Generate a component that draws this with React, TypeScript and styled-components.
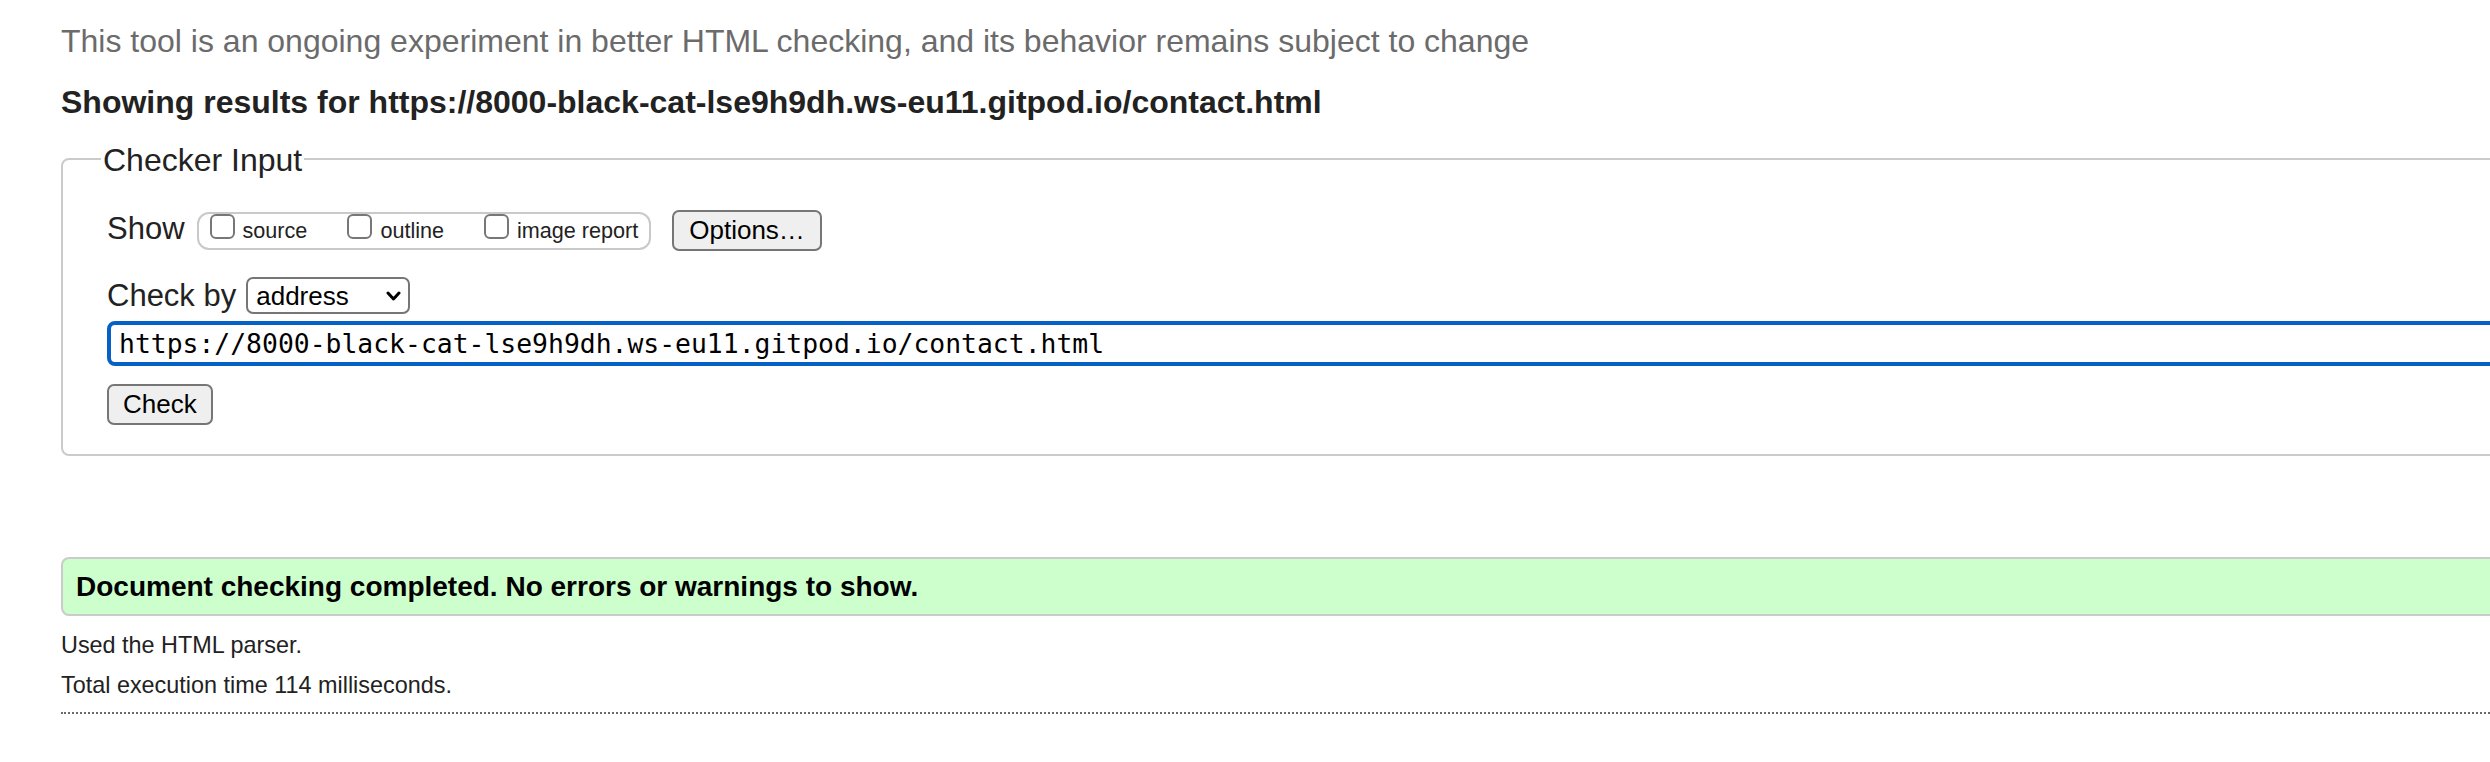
import React, { useEffect, useRef } from "react";
import styled, { createGlobalStyle } from "styled-components";

const GlobalStyle = createGlobalStyle`
  html, body {
    margin: 0;
    padding: 0;
    overflow: clip;
    background: #fff;
  }
  body {
    font-family: "Liberation Sans", Arial, Helvetica, sans-serif;
    color: #222;
  }
`;

const Viewport = styled.div`
  width: 100vw;
  overflow: clip;
`;

const Page = styled.main`
  width: calc(100vw + 200px);
  box-sizing: border-box;
  padding: 21px 0 40px 61px;
  display: flex;
  flex-direction: column;
`;

const Intro = styled.p`
  margin: 0;
  font-size: 32px;
  line-height: 40px;
  color: #6b6b6b;
`;

const Heading = styled.h2`
  margin: 23px 0 0;
  font-size: 32px;
  line-height: 36px;
  font-weight: bold;
  color: #222;
`;

const Fieldset = styled.fieldset`
  margin: 20px 0 0;
  padding: 32px 0 29px 44px;
  border: 2px solid #cbcbcb;
  border-radius: 8px;
  min-width: 0;
`;

const Legend = styled.legend`
  margin-left: -6px;
  padding: 2px 2px 0;
  font-size: 32px;
  line-height: 36px;
  color: #222;
`;

const FieldBody = styled.div`
  display: flex;
  flex-direction: column;
  align-items: flex-start;
`;

const Row = styled.div<{ $top?: number }>`
  display: flex;
  align-items: flex-start;
  margin-top: ${(p) => p.$top ?? 0}px;
`;

const RowLabel = styled.span`
  font-size: 31px;
  line-height: 37px;
  color: #222;
`;

const ShowGroup = styled.div`
  display: flex;
  align-items: flex-start;
  gap: 40px;
  height: 38px;
  box-sizing: border-box;
  margin: 2px 21px 0 12px;
  padding: 0 11px;
  border: 2px solid #c9c9c9;
  border-radius: 12px;
`;

const Option = styled.label`
  display: flex;
  align-items: flex-start;
  gap: 8px;
  font-size: 21.6px;
  line-height: 34px;
  color: #222;
`;

const Box = styled.input`
  appearance: none;
  width: 25px;
  height: 25px;
  margin: 0;
  box-sizing: border-box;
  border: 2px solid #777;
  border-radius: 6px;
  background: #fff;
`;

const Button = styled.button<{ $pad?: number }>`
  height: 41px;
  box-sizing: border-box;
  padding: 0 ${(p) => p.$pad ?? 14}px;
  font-family: "Liberation Sans", Arial, Helvetica, sans-serif;
  font-size: 26px;
  color: #000;
  background: #efefef;
  border: 2px solid #767676;
  border-radius: 7px;
`;

const SelectWrap = styled.span`
  position: relative;
  display: inline-flex;
  margin-left: 10px;
`;

const Select = styled.select`
  appearance: none;
  width: 164px;
  height: 37px;
  box-sizing: border-box;
  padding: 0 30px 0 8px;
  font-family: "Liberation Sans", Arial, Helvetica, sans-serif;
  font-size: 26px;
  color: #000;
  background: #fff;
  border: 2px solid #767676;
  border-radius: 7px;
`;

const Chevron = styled.svg`
  position: absolute;
  right: 9px;
  top: 50%;
  transform: translateY(-50%);
  pointer-events: none;
`;

const UrlInput = styled.input`
  width: 100%;
  height: 45px;
  box-sizing: border-box;
  margin-top: 7px;
  padding: 0 8px;
  font-family: "DejaVu Sans Mono", "Liberation Mono", monospace;
  font-size: 26.4px;
  color: #000;
  caret-color: #000;
  border: 4px solid #0560c8;
  border-radius: 8px;
  outline: none;
`;

const Result = styled.div`
  margin-top: 101px;
  height: 59px;
  box-sizing: border-box;
  display: flex;
  align-items: center;
  padding: 0 13px;
  background: #ccffcc;
  border: 2px solid #cbcbcb;
  border-radius: 8px;
  font-size: 28px;
  font-weight: bold;
  color: #000;
`;

const Note = styled.p<{ $top?: number }>`
  margin: ${(p) => p.$top ?? 0}px 0 0;
  font-size: 23.4px;
  line-height: 40px;
  color: #222;
`;

const Rule = styled.hr`
  margin: 7px 0 0;
  height: 0;
  border: 0;
  border-top: 2px dotted #6a6a6a;
`;

const url = "https://8000-black-cat-lse9h9dh.ws-eu11.gitpod.io/contact.html";
const showOptions = ["source", "outline", "image report"];

export default function App() {
  const inputRef = useRef<HTMLInputElement>(null);

  useEffect(() => {
    const el = inputRef.current;
    if (el) {
      el.focus({ preventScroll: true });
      el.setSelectionRange(0, 0);
      el.scrollLeft = 0;
    }
    window.scrollTo(0, 0);
  }, []);

  return (
    <Viewport>
      <GlobalStyle />
      <Page>
        <Intro>
          This tool is an ongoing experiment in better HTML checking, and its
          behavior remains subject to change
        </Intro>
        <Heading>Showing results for {url}</Heading>

        <Fieldset>
          <Legend>Checker Input</Legend>
          <FieldBody>
            <Row>
              <RowLabel>Show</RowLabel>
              <ShowGroup>
                {showOptions.map((name) => (
                  <Option key={name}>
                    <Box type="checkbox" />
                    {name}
                  </Option>
                ))}
              </ShowGroup>
              <Button type="button" $pad={15}>
                Options…
              </Button>
            </Row>

            <Row $top={26}>
              <RowLabel>Check by</RowLabel>
              <SelectWrap>
                <Select defaultValue="address">
                  <option value="address">address</option>
                  <option value="file">file upload</option>
                  <option value="text">text input</option>
                </Select>
                <Chevron width="15" height="11" viewBox="0 0 15 11">
                  <polyline
                    points="2,2.5 7.5,8.5 13,2.5"
                    fill="none"
                    stroke="#000"
                    strokeWidth="3"
                    strokeLinecap="round"
                    strokeLinejoin="round"
                  />
                </Chevron>
              </SelectWrap>
            </Row>

            <UrlInput ref={inputRef} type="url" defaultValue={url} />

            <Row $top={18}>
              <Button type="submit">Check</Button>
            </Row>
          </FieldBody>
        </Fieldset>

        <Result>Document checking completed. No errors or warnings to show.</Result>
        <Note $top={9}>Used the HTML parser.</Note>
        <Note>Total execution time 114 milliseconds.</Note>
        <Rule />
      </Page>
    </Viewport>
  );
}
